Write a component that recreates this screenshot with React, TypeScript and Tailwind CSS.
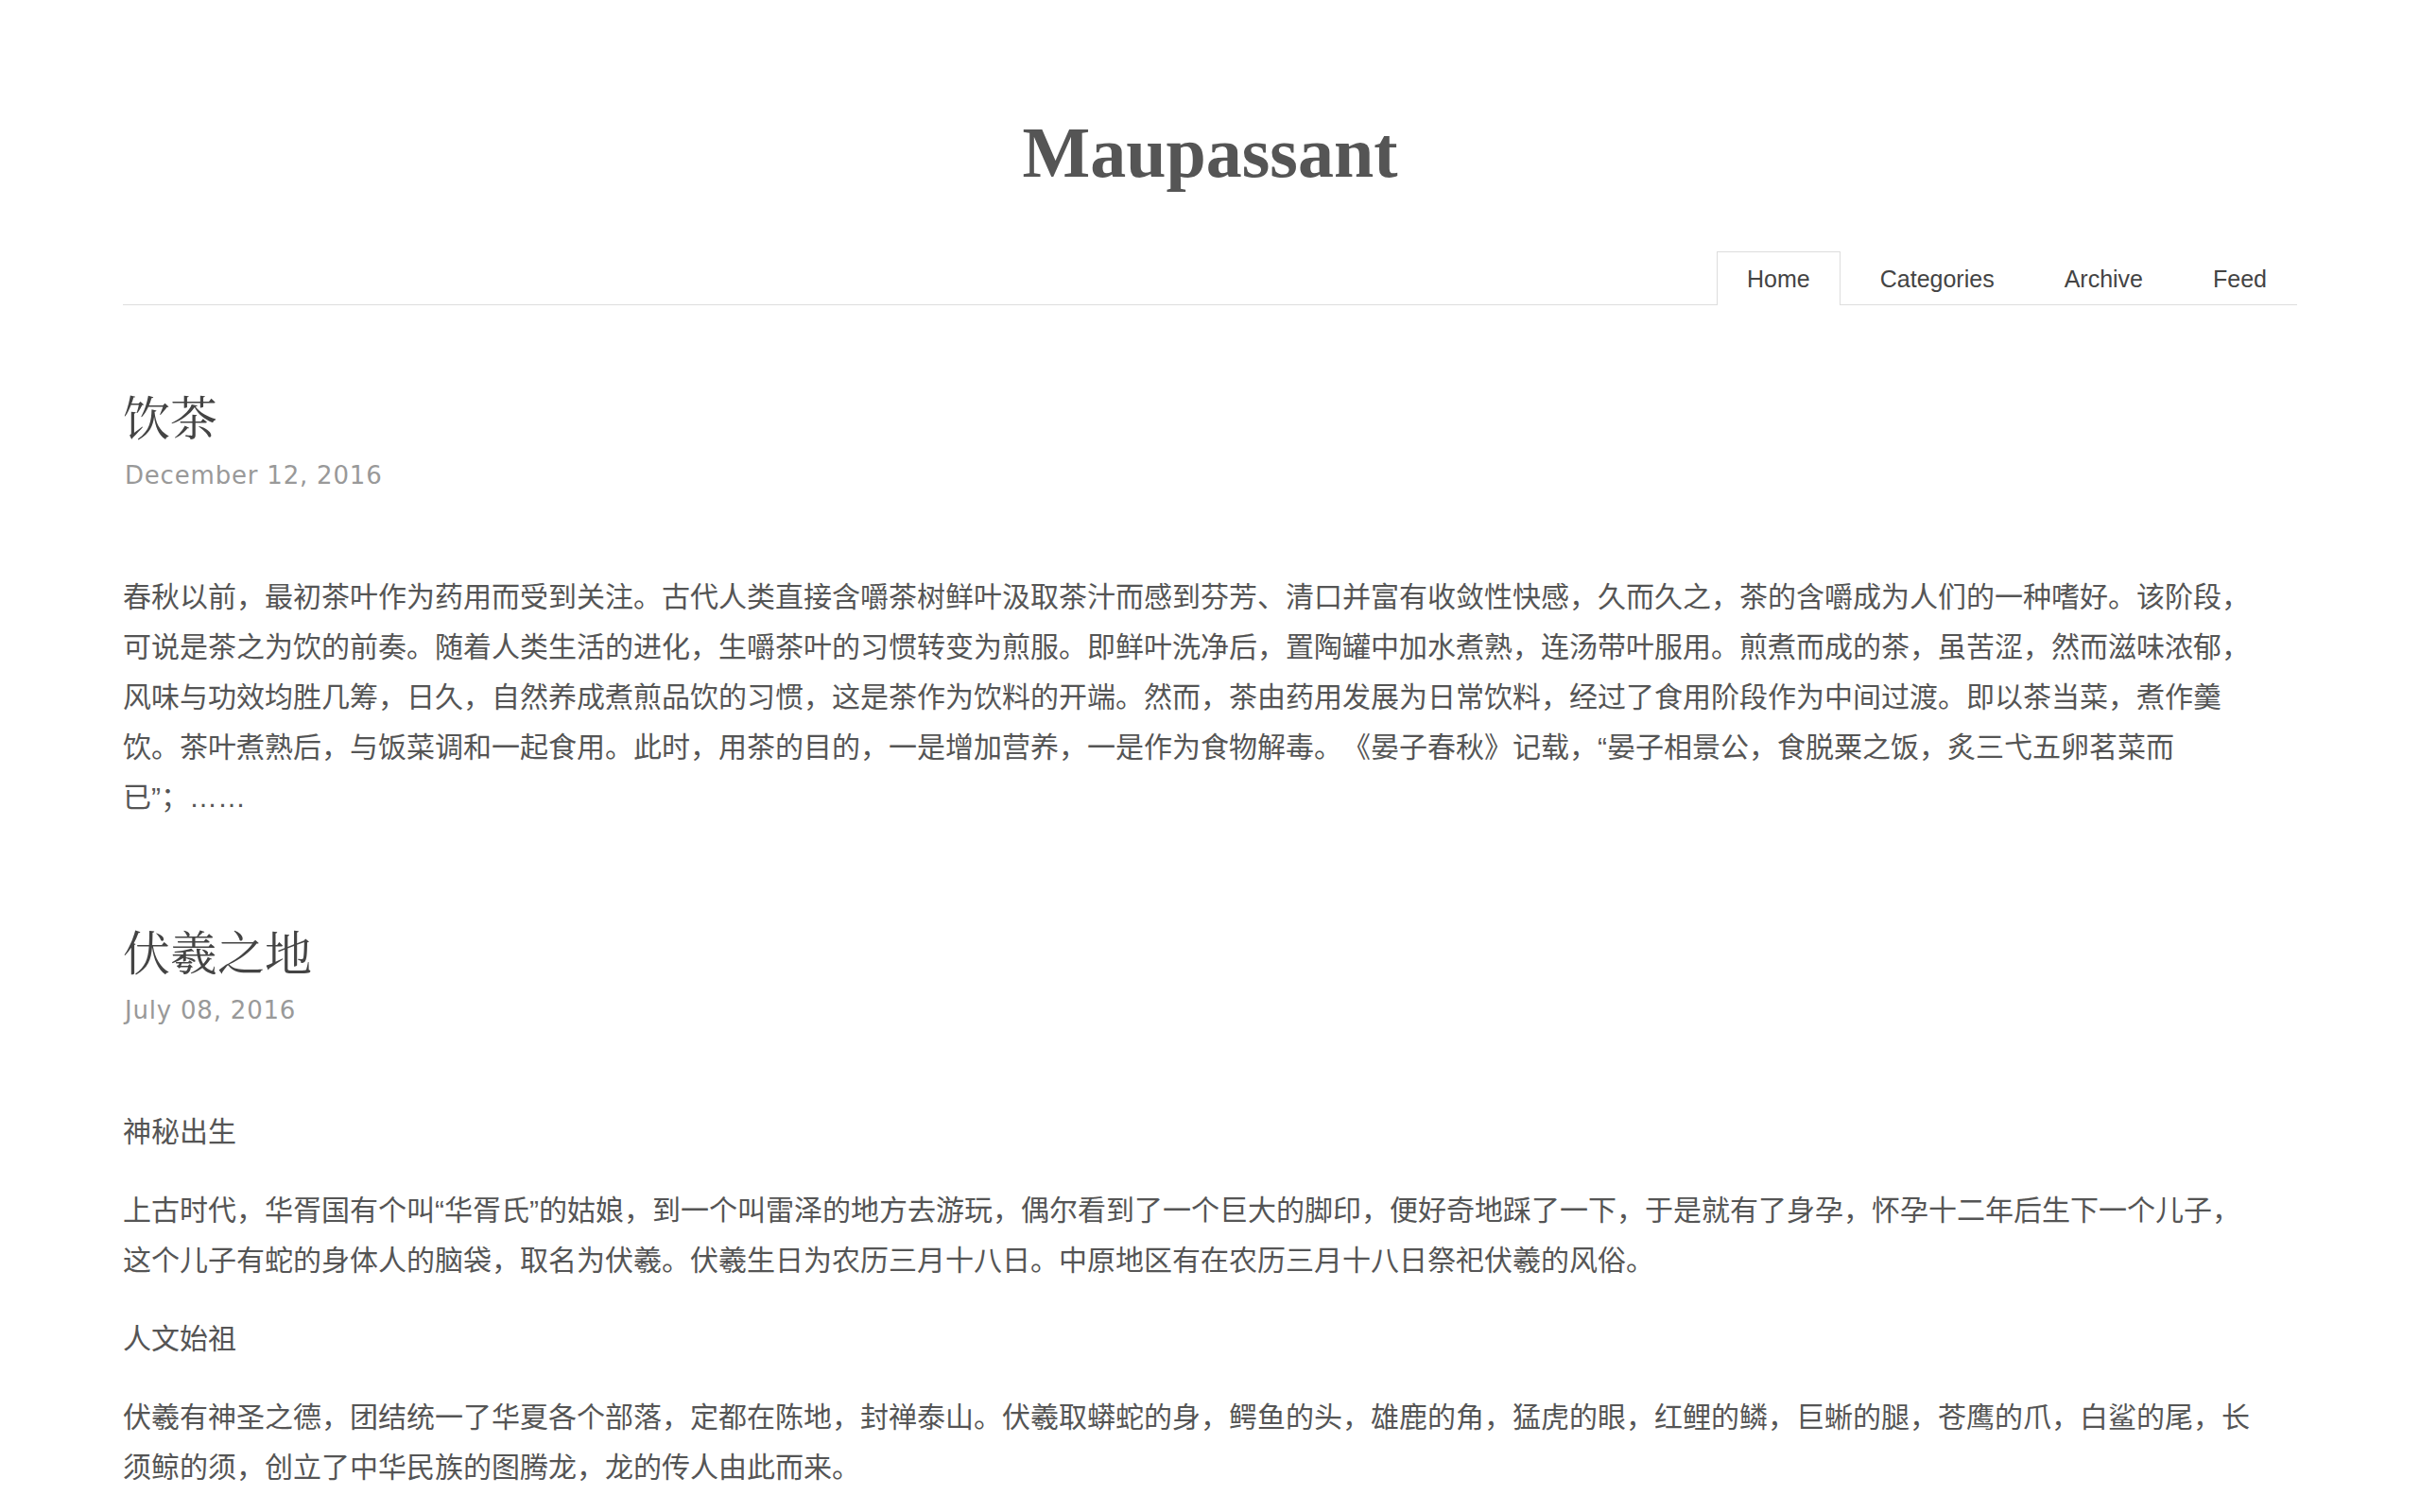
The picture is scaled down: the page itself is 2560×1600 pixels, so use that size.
const posts = [
  {
    title: "饮茶",
    date: "December 12, 2016",
    paragraphs: [
      "春秋以前，最初茶叶作为药用而受到关注。古代人类直接含嚼茶树鲜叶汲取茶汁而感到芬芳、清口并富有收敛性快感，久而久之，茶的含嚼成为人们的一种嗜好。该阶段，可说是茶之为饮的前奏。随着人类生活的进化，生嚼茶叶的习惯转变为煎服。即鲜叶洗净后，置陶罐中加水煮熟，连汤带叶服用。煎煮而成的茶，虽苦涩，然而滋味浓郁，风味与功效均胜几筹，日久，自然养成煮煎品饮的习惯，这是茶作为饮料的开端。然而，茶由药用发展为日常饮料，经过了食用阶段作为中间过渡。即以茶当菜，煮作羹饮。茶叶煮熟后，与饭菜调和一起食用。此时，用茶的目的，一是增加营养，一是作为食物解毒。《晏子春秋》记载，“晏子相景公，食脱粟之饭，炙三弋五卵茗菜而已”；……",
    ],
  },
  {
    title: "伏羲之地",
    date: "July 08, 2016",
    paragraphs: [
      "神秘出生",
      "上古时代，华胥国有个叫“华胥氏”的姑娘，到一个叫雷泽的地方去游玩，偶尔看到了一个巨大的脚印，便好奇地踩了一下，于是就有了身孕，怀孕十二年后生下一个儿子，这个儿子有蛇的身体人的脑袋，取名为伏羲。伏羲生日为农历三月十八日。中原地区有在农历三月十八日祭祀伏羲的风俗。",
      "人文始祖",
      "伏羲有神圣之德，团结统一了华夏各个部落，定都在陈地，封禅泰山。伏羲取蟒蛇的身，鳄鱼的头，雄鹿的角，猛虎的眼，红鲤的鳞，巨蜥的腿，苍鹰的爪，白鲨的尾，长须鲸的须，创立了中华民族的图腾龙，龙的传人由此而来。",
    ],
  },
];

const navItems = ["Home", "Categories", "Archive", "Feed"];

export default function App() {
  return (
    <div className="min-h-screen bg-white">
      <div className="mx-auto w-[2300px] pt-[123px]">
        <h1 className="text-center font-['Liberation_Serif',serif] text-[76px] font-bold leading-none text-[#555]">
          Maupassant
        </h1>
        <div className="mt-[67px] flex justify-end border-b border-[#ddd]">
          <ul className="flex gap-[10px] font-['Liberation_Sans',sans-serif] text-[25px] leading-[26px] text-[#444]">
            {navItems.map((item, i) => (
              <li
                key={item}
                className={
                  i === 0
                    ? "-mb-px border border-b-0 border-[#ddd] bg-white px-[31px] py-[15px]"
                    : "-mb-px border border-b-0 border-transparent px-[31px] py-[15px]"
                }
              >
                {item}
              </li>
            ))}
          </ul>
        </div>

        <div className="pt-[86px] pr-[35px]">
          {posts.map((post, idx) => (
            <div key={post.title} className={idx > 0 ? "mt-[105px]" : ""}>
              <h2 className="font-['Noto_Serif_CJK_SC','Noto_Sans_CJK_SC',serif] text-[50px] font-normal leading-[60px] text-[#444]">
                {post.title}
              </h2>
              <div className="mt-[16px] pl-[2px] font-['DejaVu_Sans',sans-serif] text-[26px] leading-[36px] tracking-[0.8px] text-[#999]">
                {post.date}
              </div>
              <div className="mt-[84px] flex flex-col gap-[30px] font-['Liberation_Sans','Noto_Sans_CJK_SC',sans-serif] text-[30px] leading-[53px] text-[#555] [text-spacing-trim:space-all]">
                {post.paragraphs.map((p, j) => (
                  <p key={j}>{p}</p>
                ))}
              </div>
            </div>
          ))}
        </div>
      </div>
    </div>
  );
}
